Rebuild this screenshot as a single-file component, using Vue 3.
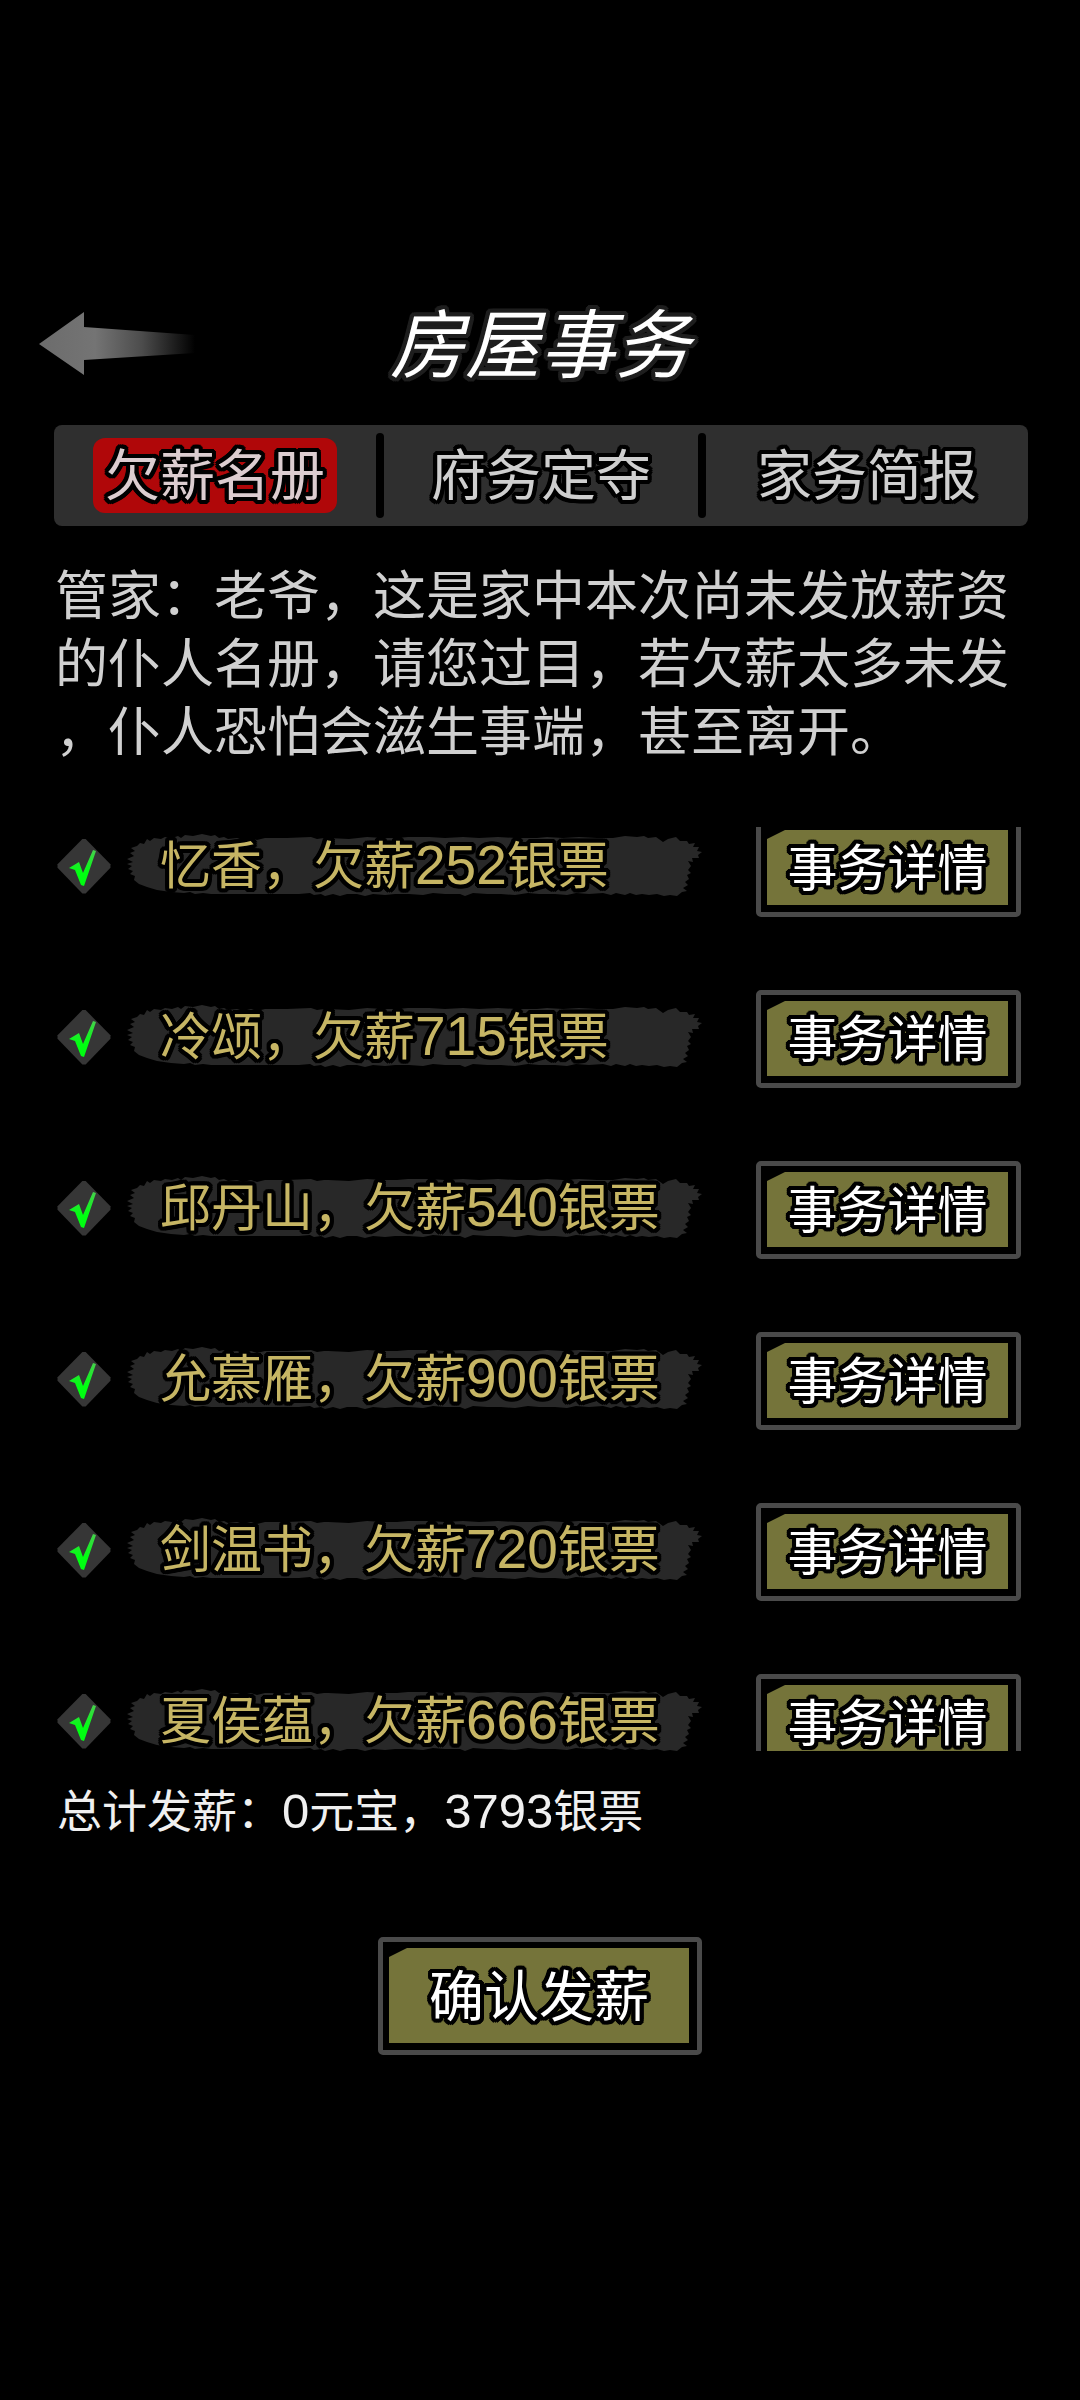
<template>
  <main class="house">
    <header class="house__head">
      <button class="back" type="button" aria-label="返回">
        <svg viewBox="0 0 160 66" width="160" height="66" aria-hidden="true">
          <defs>
            <linearGradient id="back-fade" x1="0" y1="0" x2="1" y2="0">
              <stop offset="0%" stop-color="#6c6c6c" />
              <stop offset="36%" stop-color="#747474" />
              <stop offset="66%" stop-color="#4c4c4c" />
              <stop offset="100%" stop-color="#000" />
            </linearGradient>
          </defs>
          <path d="M0,33 L45,1 V16 L156,24 V42 L45,49 V64 Z" fill="url(#back-fade)" />
        </svg>
      </button>
      <h1 class="house__title">房屋事务</h1>
    </header>

    <nav class="tabs">
      <button
        v-for="(tab, i) in tabs"
        :key="tab"
        type="button"
        class="tabs__item"
        :class="{ 'tabs__item--active': i === activeTab }"
        @click="activeTab = i"
      >
        <span class="tabs__label outlined">{{ tab }}</span>
      </button>
    </nav>

    <p class="notice">管家：老爷，这是家中本次尚未发放薪资的仆人名册，请您过目，若欠薪太多未发，仆人恐怕会滋生事端，甚至离开。</p>

    <div class="roster">
      <ul class="roster__list">
        <li v-for="(servant, i) in servants" :key="servant.name" class="roster__row">
          <input :id="`servant-${i}`" v-model="servant.checked" class="tick" type="checkbox" />
          <label class="debt" :for="`servant-${i}`">
            <svg class="debt__brush" viewBox="0 0 576 64" preserveAspectRatio="none" aria-hidden="true">
              <path :d="brush" />
            </svg>
            <span class="debt__text outlined">{{ servant.name }}，欠薪<span class="debt__num">{{ servant.owed }}</span>银票</span>
          </label>
          <button class="plate" type="button">
            <span class="plate__face"><span class="outlined">事务详情</span></span>
          </button>
        </li>
      </ul>
    </div>

    <p class="total">总计发薪：<span class="total__num">0</span>元宝，<span class="total__num">{{ total }}</span>银票</p>

    <button class="plate plate--large" type="button">
      <span class="plate__face"><span class="outlined">确认发薪</span></span>
    </button>
  </main>
</template>

<script setup>
import { computed, ref } from "vue";

const tabs = ["欠薪名册", "府务定夺", "家务简报"];
const activeTab = ref(0);

const servants = ref([
  { name: "忆香", owed: 252, checked: true },
  { name: "冷颂", owed: 715, checked: true },
  { name: "邱丹山", owed: 540, checked: true },
  { name: "允慕雁", owed: 900, checked: true },
  { name: "剑温书", owed: 720, checked: true },
  { name: "夏侯蕴", owed: 666, checked: true },
]);

const total = computed(() => servants.value.reduce((sum, s) => sum + (s.checked ? s.owed : 0), 0));

// dry brush stroke: bristled ends, slightly ragged long edges
const brush = [
  "M0,25 L7,22 L3,19 L8,17 L4,14 L10,12 L13,9 L17,10 L20,5 L23,7 L27,4 L34,5 L38,3 L45,4 L51,2 L54,4 L58,1 L66,2 L75,0 L84,2 L88,1 L92,4",
  "L97,3 L101,5 L110,4 L116,6 L124,4 L130,6 L138,4 L160,4 L184,3 L190,5 L197,4 L201,4 L222,5 L240,3 L256,4 L270,4 L281,3 L302,3 L318,4 L336,3",
  "L352,4 L371,3 L390,4 L410,4 L420,3 L436,4 L452,3 L470,4 L486,4 L498,2 L510,3 L517,2 L521,4 L529,3 L536,8 L541,5 L549,3 L553,7 L560,7 L562,10",
  "L568,9 L566,13 L572,13 L570,17 L575,18 L571,21 L572,24 L565,24 L566,28 L561,27 L564,32 L561,36 L564,39 L560,41 L562,45 L558,48 L561,51",
  "L556,54 L560,57 L555,58 L550,62 L543,61 L537,62 L530,60 L522,61 L515,60 L509,61 L503,59 L498,61 L489,59 L484,61 L476,59 L462,60 L449,59",
  "L440,61 L428,60 L412,60 L401,59 L388,61 L374,60 L360,60 L346,59 L338,62 L333,60 L318,60 L306,59 L296,61 L282,60 L268,60 L258,61 L246,60",
  "L238,62 L230,60 L220,60 L213,62 L206,60 L198,62 L194,60 L187,61 L183,59 L172,60 L150,60 L128,60 L104,60 L84,60 L76,59 L68,60 L63,58 L57,59",
  "L44,58 L30,56 L20,53 L12,50 L7,46 L8,42 L3,40 L6,37 L1,35 L5,32 L0,30 L6,28 Z",
].join(" ");
</script>

<style>
body {
  background: #000;
}
</style>

<style scoped>
.house {
  display: flex;
  flex-direction: column;
  box-sizing: border-box;
  height: 100vh;
  padding: 297px 0 345px;
  background: #000;
  color: #d0d0d0;
  font-family: Inter, "Noto Sans CJK SC", sans-serif;
}
button {
  padding: 0;
  border: 0;
  background: none;
  color: inherit;
  font: inherit;
  cursor: pointer;
}
/* round 4px outline, built from shadows on a circle */
.outlined,
.house__title {
  --edge: #000;
  text-shadow:
    4px 0 var(--edge),
    4px 2px var(--edge),
    3px 3px var(--edge),
    2px 4px var(--edge),
    0 4px var(--edge),
    -2px 4px var(--edge),
    -3px 3px var(--edge),
    -4px 2px var(--edge),
    -4px 0 var(--edge),
    -4px -2px var(--edge),
    -3px -3px var(--edge),
    -2px -4px var(--edge),
    0 -4px var(--edge),
    2px -4px var(--edge),
    3px -3px var(--edge),
    4px -2px var(--edge),
    2px 0 var(--edge),
    -2px 0 var(--edge),
    0 2px var(--edge),
    0 -2px var(--edge);
}
.house__head {
  display: grid;
  grid-template-columns: 1fr auto 1fr;
  align-items: center;
  padding: 0 39px;
}
.back {
  justify-self: start;
  height: 66px;
}
.back svg {
  display: block;
}
.house__title {
  --edge: #1e1e1e;
  margin: 0;
  padding-bottom: 8px;
  color: #fff;
  font-family: KaiTi, STKaiti, "AR PL UKai CN", "Noto Sans CJK SC", serif;
  font-size: 75px;
  font-style: italic;
  font-weight: 400;
  line-height: 85px;
}
.tabs {
  display: grid;
  grid-template-columns: 322fr 314fr 322fr;
  gap: 8px;
  margin: 35px 52px 0 54px;
  padding: 8px 0;
  border-radius: 8px;
  background: #2f2f2f;
}
.tabs__item {
  position: relative;
  display: flex;
  align-items: center;
  justify-content: center;
  height: 85px;
  color: #cfcfcf;
  font-size: 55px;
}
.tabs__item + .tabs__item::before {
  content: "";
  position: absolute;
  top: 0;
  bottom: 0;
  left: -8px;
  width: 8px;
  border-radius: 4px;
  background: #000;
}
.tabs__label {
  padding: 0 12px;
  border-radius: 12px;
  line-height: 75px;
}
.tabs__item--active .tabs__label {
  background: #b00709;
  color: #dccdd0;
}
.notice {
  margin: 36px 55px 0;
  font-size: 53px;
  line-height: 68px;
  line-break: anywhere;
}
.roster {
  flex: 1;
  min-height: 0;
  margin-top: 61px;
  overflow: hidden;
}
.roster__list {
  display: flex;
  flex-direction: column;
  gap: 73px;
  margin: -8px 0 0;
  padding: 0 59px 0 57px;
  list-style: none;
}
.roster__row {
  display: flex;
  align-items: center;
}
.tick {
  flex: none;
  appearance: none;
  width: 54px;
  height: 56px;
  margin: 0 16px 4px 0;
  background: #363636;
  clip-path: polygon(47% 2%, 53% 2%, 99% 47%, 99% 53%, 53% 99%, 47% 99%, 1% 53%, 1% 47%);
}
.tick:checked::before {
  content: "";
  display: block;
  width: 54px;
  height: 56px;
  background: linear-gradient(#45d04c 22%, #0f1 62%);
  clip-path: polygon(12px 30px, 22px 24px, 26px 35px, 36px 12px, 39px 13px, 27px 48px, 24px 47px, 18px 32px);
}
.debt {
  position: relative;
  flex: 0 1 576px;
  margin-bottom: 4px;
  color: #c6b564;
  font-size: 51px;
  line-height: 64px;
  white-space: nowrap;
}
.debt__brush {
  position: absolute;
  inset: 0;
  width: 100%;
  height: 100%;
  fill: #282828;
}
.debt__text {
  position: relative;
  display: block;
  height: 64px;
  padding-left: 33px;
}
.debt__num {
  font-family: "Helvetica Neue", "Liberation Sans", sans-serif;
  font-size: 55px;
  line-height: 1;
}
.plate {
  box-sizing: border-box;
  width: 265px;
  margin-left: auto;
  padding: 6px 8px 7px 6px;
  border: 5px solid #4a4a4a;
  border-radius: 5px;
  color: #fff;
  font-size: 50px;
  line-height: 73px;
}
.plate__face {
  display: block;
  padding-top: 2px;
  background: #75743a;
  clip-path: polygon(18px 0, 100% 0, 100% 100%, 0 100%, 0 9px);
}
.plate--large {
  width: 324px;
  margin: 95px auto 0;
  font-size: 55px;
  line-height: 93px;
}
.total {
  height: 60px;
  margin: 31px 57px 0;
  color: #f0f0f0;
  font-size: 45px;
  line-height: 60px;
}
.total__num {
  font-family: "Helvetica Neue", "Liberation Sans", sans-serif;
  font-size: 49px;
  line-height: 1;
}
</style>
